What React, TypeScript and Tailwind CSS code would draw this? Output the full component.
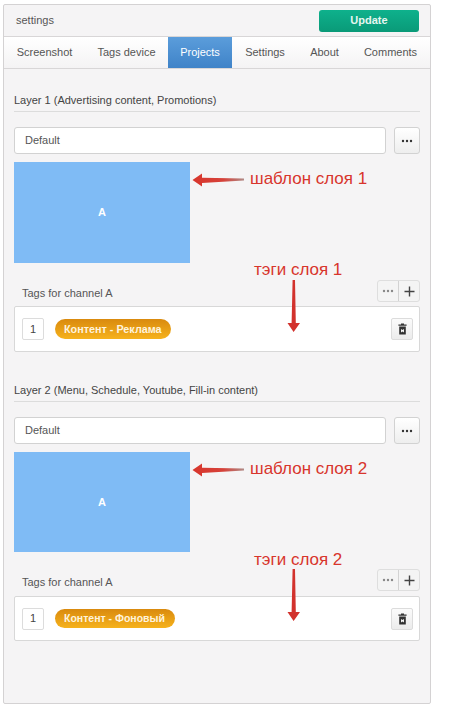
import React from "react";

const font = { fontFamily: '"Liberation Sans", Arial, sans-serif' };

function LeftArrow() {
  return (
    <svg width="54" height="16" viewBox="0 0 54 16">
      <defs>
        <linearGradient id="la" x1="0" x2="1" y1="0" y2="0">
          <stop offset="0" stopColor="#d8352c" />
          <stop offset="0.6" stopColor="#d6423a" />
          <stop offset="1" stopColor="#b08a86" />
        </linearGradient>
      </defs>
      <path d="M0.5 8 L10 1.5 L10 5.8 L52 6.5 L52 8.6 L10 11 L10 14.5 Z" fill="url(#la)" />
    </svg>
  );
}

function DownArrow() {
  return (
    <svg width="16" height="54" viewBox="0 0 16 54">
      <path d="M6.6 0 L9 0 L9.8 43 L14 43 L7.6 52 L1.5 43 L5.6 43 Z" fill="#d2322d" />
    </svg>
  );
}

function Dots({ color = "#333" }: { color?: string }) {
  return (
    <svg width="12" height="4" viewBox="0 0 12 4">
      <circle cx="2" cy="2" r="1.2" fill={color} />
      <circle cx="6" cy="2" r="1.2" fill={color} />
      <circle cx="10" cy="2" r="1.2" fill={color} />
    </svg>
  );
}

function Trash() {
  return (
    <svg width="9" height="12" viewBox="0 0 9 12">
      <path d="M3 0.5 H6 V1.5 H8.6 V2.8 H0.4 V1.5 H3 Z" fill="#333" />
      <path fillRule="evenodd" d="M1.2 3.6 H7.8 V11.5 H1.2 Z M3 6 V9.6 L4.5 8.6 L6 9.6 V6 L4.5 7 Z" fill="#333" />
    </svg>
  );
}

function Section({
  title,
  tag,
  pillClass,
  boxH,
  blockH,
  rowH,
}: {
  title: string;
  tag: string;
  pillClass: string;
  boxH: string;
  blockH: string;
  rowH: string;
}) {
  return (
    <section>
      <div className="h-[23px] border-b border-[#dcdcdc] text-[11px] leading-[22px] text-[#444]">{title}</div>
      <div className="mt-[15px] flex gap-[8px]">
        <div className="flex h-[27px] w-[372px] items-center rounded-[3px] border border-[#d2d2d2] bg-white pl-[10px] text-[11px] text-[#555]">
          Default
        </div>
        <div className="flex h-[27px] w-[26px] items-center justify-center rounded-[3px] border border-[#d2d2d2] bg-gradient-to-b from-white to-[#eeeeee]">
          <Dots />
        </div>
      </div>
      <div
        className={`mt-[8px] flex w-[176px] items-center justify-center bg-[#7fbbf5] text-[11px] font-bold text-white ${blockH}`}
      >
        A
      </div>
      <div className={`mt-[17px] flex items-start justify-between ${rowH}`}>
        <div className="pl-[8px] pt-[6px] text-[11px] leading-[14px] text-[#555]">Tags for channel A</div>
        <div className="flex h-[22px] w-[43px] rounded-[3px] border border-[#dedede] bg-[#f4f4f4]">
          <div className="flex w-[21px] items-center justify-center border-r border-[#d2d2d2]">
            <Dots color="#888" />
          </div>
          <div className="flex flex-1 items-center justify-center text-[#333]">
            <svg width="11" height="11" viewBox="0 0 11 11">
              <path d="M4.8 0.5 H6.2 V4.8 H10.5 V6.2 H6.2 V10.5 H4.8 V6.2 H0.5 V4.8 H4.8 Z" fill="#444" />
            </svg>
          </div>
        </div>
      </div>
      <div
        className={`flex items-center justify-between rounded-[2px] border border-[#d8d8d8] bg-white pl-[7px] pr-[6px] ${boxH}`}
      >
        <div className="flex items-center">
          <div className="flex h-[22px] w-[22px] items-center justify-center rounded-[2px] border border-[#dcdcdc] bg-white text-[11px] text-[#444]">
            1
          </div>
          <div
            className={`ml-[11px] flex items-center rounded-full bg-gradient-to-b from-[#d98a0e] to-[#f6b21c] pl-[9px] font-bold text-[#fff3dc] ${pillClass}`}
          >
            {tag}
          </div>
        </div>
        <div className="flex h-[22px] w-[22px] items-center justify-center rounded-[2px] border border-[#dcdcdc] bg-gradient-to-b from-[#fbfbfb] to-[#ececec]">
          <Trash />
        </div>
      </div>
    </section>
  );
}

export default function App() {
  const tabs = ["Screenshot", "Tags device", "Projects", "Settings", "About", "Comments"];
  const widths = ["w-[81px]", "w-[83px]", "w-[64px]", "w-[66px]", "w-[53px]", "w-[79px]"];
  return (
    <div className="relative h-[707px] w-[454px] overflow-hidden bg-white pl-[3px] pt-[4px]" style={font}>
      <div className="flex h-[700px] w-[428px] flex-col rounded-[2px] border border-[#d4d2d3] bg-[#f5f4f5]">
        <header className="flex h-[32px] shrink-0 items-center justify-between border-b border-[#d8d6d7] pl-[12px] pr-[11px]">
          <span className="text-[11px] text-[#555]">settings</span>
          <button className="h-[22px] w-[100px] rounded-[3px] bg-gradient-to-b from-[#0eb18c] to-[#0a9a78] text-[11px] font-bold text-[#e6f6f0]">
            Update
          </button>
        </header>
        <nav className="flex h-[32px] shrink-0 border-b border-[#d8d6d7] bg-gradient-to-b from-white to-[#f4f3f4]">
          {tabs.map((t, i) => (
            <div
              key={t}
              className={`flex items-center justify-center text-[11px] ${widths[i]} ${
                t === "Projects"
                  ? "bg-gradient-to-b from-[#5b9ddb] to-[#3f83c8] text-white"
                  : "text-[#555]"
              }`}
            >
              {t}
            </div>
          ))}
        </nav>
        <main className="flex flex-col gap-[27px] pl-[10px] pr-[10px] pt-[20px]">
          <Section
            title="Layer 1 (Advertising content, Promotions)"
            tag="Контент - Реклама"
            pillClass="h-[20px] w-[116px] text-[10.8px]"
            boxH="h-[46px]"
            blockH="h-[101px]"
            rowH="h-[26px]"
          />
          <Section
            title="Layer 2 (Menu, Schedule, Youtube, Fill-in content)"
            tag="Контент - Фоновый"
            pillClass="h-[19px] w-[120px] text-[10.5px]"
            boxH="h-[45px]"
            blockH="h-[100px]"
            rowH="h-[27px]"
          />
        </main>
      </div>

      <div className="absolute left-[192px] top-[172px]">
        <LeftArrow />
      </div>
      <div className="absolute left-[192px] top-[462px]">
        <LeftArrow />
      </div>
      <div className="absolute left-[250px] top-[168px] text-[17px] leading-[22px] text-[#d8352c]">шаблон слоя 1</div>
      <div className="absolute left-[250px] top-[458px] text-[17px] leading-[22px] text-[#d8352c]">шаблон слоя 2</div>
      <div className="absolute left-[254px] top-[259px] text-[17px] leading-[22px] text-[#d8352c]">тэги слоя 1</div>
      <div className="absolute left-[254px] top-[549px] text-[17px] leading-[22px] text-[#d8352c]">тэги слоя 2</div>
      <div className="absolute left-[286px] top-[280px]">
        <DownArrow />
      </div>
      <div className="absolute left-[286px] top-[569px]">
        <DownArrow />
      </div>
    </div>
  );
}
